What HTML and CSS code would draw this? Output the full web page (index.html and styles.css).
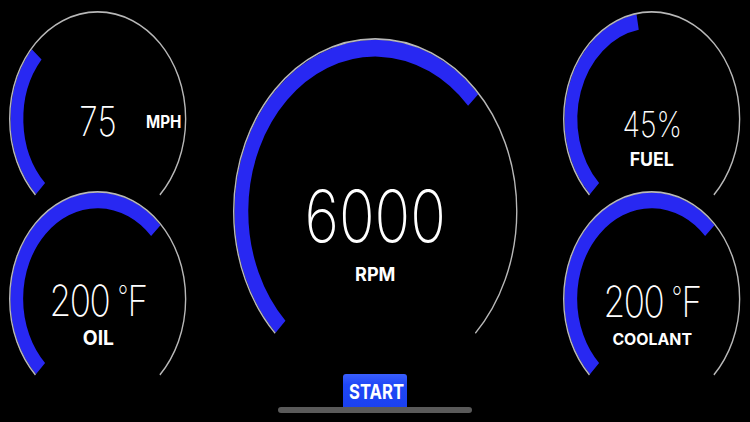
FILE: index.html
```html
<!DOCTYPE html>
<html lang="en">
<head>
<meta charset="utf-8">
<title>Gauges</title>
<link rel="stylesheet" href="styles.css">
</head>
<body>
<div class="screen">
  <div class="col col-side">
    <div class="gauge gauge-sm">
      <svg class="dial" viewBox="0 0 192 192" preserveAspectRatio="none">
        <path class="bar" d="M34.13 157.87 A87.5 87.5 0 0 1 29.96 38.59"/>
        <path class="rim" d="M28.65 163.35 A95.25 95.25 0 1 1 163.35 163.35"/>
      </svg>
      <div class="readout readout-mph">
        <span></span>
        <span class="value v-mph">75</span>
        <span class="label l-mph">MPH</span>
      </div>
    </div>
    <div class="gauge gauge-sm gauge-lower">
      <svg class="dial" viewBox="0 0 192 192" preserveAspectRatio="none">
        <path class="bar" d="M34.13 157.87 A87.5 87.5 0 1 1 158.94 35.22"/>
        <path class="rim" d="M28.65 163.35 A95.25 95.25 0 1 1 163.35 163.35"/>
      </svg>
      <div class="readout readout-oil">
        <span class="value v-temp">200 <span class="deg">°</span>F</span>
        <span class="label l-oil">OIL</span>
      </div>
    </div>
  </div>

  <div class="col col-center">
    <div class="gauge gauge-lg">
      <svg class="dial" viewBox="0 0 308 308" preserveAspectRatio="none">
        <path class="bar bar-lg" d="M51.47 256.53 A145 145 0 1 1 260.05 55.11"/>
        <path class="rim" d="M45.64 262.36 A153.25 153.25 0 1 1 262.36 262.36"/>
      </svg>
      <div class="readout readout-rpm">
        <span class="value v-rpm">6000</span>
        <span class="label l-rpm">RPM</span>
      </div>
    </div>
    <button class="start" type="button"><span class="start-text">START</span></button>
  </div>

  <div class="col col-side">
    <div class="gauge gauge-sm">
      <svg class="dial" viewBox="0 0 192 192" preserveAspectRatio="none">
        <path class="bar" d="M34.13 157.87 A87.5 87.5 0 0 1 80.81 9.83"/>
        <path class="rim" d="M28.65 163.35 A95.25 95.25 0 1 1 163.35 163.35"/>
      </svg>
      <div class="readout readout-fuel">
        <span class="value v-fuel">45%</span>
        <span class="label l-fuel">FUEL</span>
      </div>
    </div>
    <div class="gauge gauge-sm gauge-lower">
      <svg class="dial" viewBox="0 0 192 192" preserveAspectRatio="none">
        <path class="bar" d="M34.13 157.87 A87.5 87.5 0 1 1 158.94 35.22"/>
        <path class="rim" d="M28.65 163.35 A95.25 95.25 0 1 1 163.35 163.35"/>
      </svg>
      <div class="readout readout-coolant">
        <span class="value v-temp">200 <span class="deg">°</span>F</span>
        <span class="label l-coolant">COOLANT</span>
      </div>
    </div>
  </div>

  <div class="home-indicator"></div>
</div>
</body>
</html>
```

FILE: styles.css
```css
html, body {
  margin: 0;
  padding: 0;
  background: #000;
}

body {
  font-family: "Inter", "Roboto", "Liberation Sans", sans-serif;
  color: #fff;
}

.screen {
  position: relative;
  width: 750px;
  height: 422px;
  overflow: hidden;
  display: grid;
  grid-template-columns: 195.81px 1fr 195.81px;
}

.col {
  display: flex;
  flex-direction: column;
}

.col-side {
  padding: 11.25px 9.24px 0 9.24px;
}

.col-center {
  align-items: center;
  padding-top: 37.7px;
}

.gauge {
  position: relative;
  flex: none;
}

.gauge-sm {
  width: 177.34px;
  height: 216.06px;
}

.gauge-lower {
  margin-top: -36px;
}

.gauge-lg {
  width: 284.48px;
  height: 346.6px;
}

.dial {
  position: absolute;
  inset: 0;
  width: 100%;
  height: 100%;
  overflow: visible;
}

.bar {
  fill: none;
  stroke: #2828f2;
  stroke-width: 14;
  stroke-linecap: butt;
}

.bar-lg {
  stroke-width: 15;
}

.rim {
  fill: none;
  stroke: #b8b8b8;
  stroke-width: 1.5;
}

.readout {
  position: relative;
  display: flex;
  flex-direction: column;
  align-items: center;
}

/* Glyphs are narrowed to the screenshot's horizontal squeeze */
.value,
.label {
  display: inline-block;
  white-space: nowrap;
}

.value {
  font-weight: 200;
  transform: scaleX(0.8208);
}

.label {
  font-weight: 700;
  transform: scaleX(0.93);
}

.readout-mph {
  display: grid;
  grid-template-columns: 1fr auto 1fr;
  align-items: center;
  padding-top: 91.15px;
}

.v-mph {
  width: 48px;
  text-align: center;
  font-size: 40.5px;
  line-height: 40.5px;
}

.l-mph {
  justify-self: start;
  margin-left: 24px;
  transform: scaleX(0.9);
  transform-origin: left center;
  font-size: 16.9px;
  line-height: 16.9px;
}

.readout-fuel {
  padding-top: 96px;
}

.v-fuel {
  font-size: 34.9px;
  line-height: 34.9px;
}

.l-fuel {
  margin-top: 8.3px;
  font-size: 19.1px;
  line-height: 19.1px;
}

.v-temp {
  font-size: 42.8px;
  line-height: 42.8px;
  letter-spacing: -1.8px;
}

.deg {
  position: relative;
  top: -10px;
  font-size: 28px;
  line-height: 1;
  margin-right: 1px;
}

.readout-oil {
  padding-top: 89.1px;
}

.l-oil {
  margin-top: 5px;
  font-size: 20.3px;
  line-height: 20.3px;
  transform: scaleX(0.95);
}

.readout-coolant {
  padding-top: 90.2px;
}

.l-coolant {
  margin-top: 6.5px;
  font-size: 16px;
  line-height: 16px;
  transform: scaleX(0.99);
}

.readout-rpm {
  padding-top: 142.2px;
}

.v-rpm {
  font-size: 72px;
  line-height: 72px;
}

.l-rpm {
  margin-top: 13.2px;
  font-size: 19px;
  line-height: 19px;
  transform: scaleX(0.95);
}

.start {
  position: relative;
  width: 64px;
  height: 36px;
  margin-top: -10.2px;
  padding: 0;
  border: none;
  border-radius: 3px;
  background: linear-gradient(#3a5fff 0%, #1f47f6 30%, #1a40ef 100%);
  color: #fff;
  font-family: "Inter", "Roboto", "Liberation Sans", sans-serif;
  font-weight: 700;
  font-size: 20.3px;
  line-height: 36px;
  text-align: center;
}

.start-text {
  display: inline-block;
  transform: scaleX(0.8208);
}

.home-indicator {
  position: absolute;
  left: 278px;
  bottom: 9px;
  width: 194px;
  height: 5.6px;
  border-radius: 3px;
  background: #5a5a5a;
}
```
